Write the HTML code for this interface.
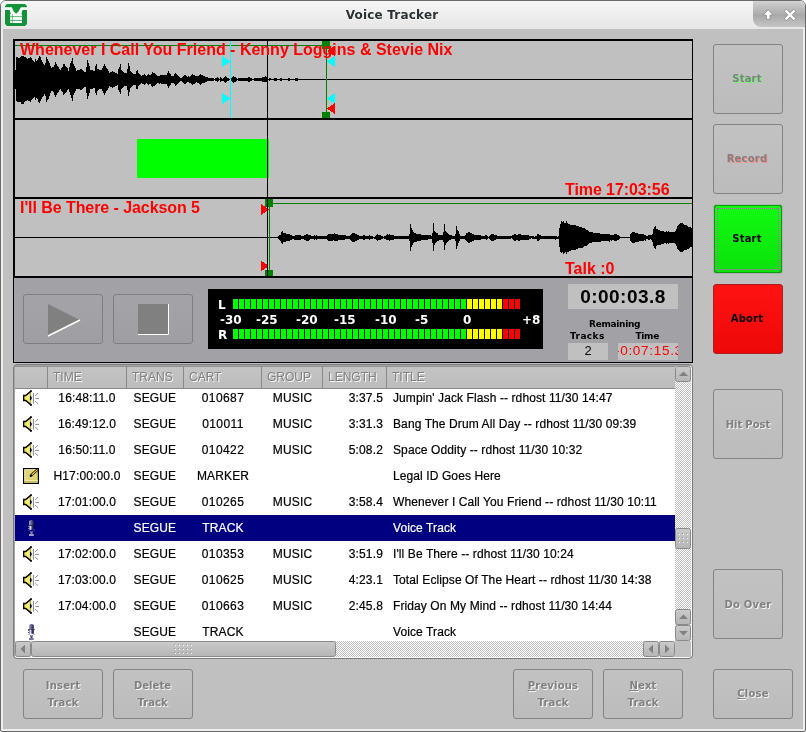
<!DOCTYPE html>
<html><head><meta charset="utf-8"><title>Voice Tracker</title>
<style>
html,body{margin:0;padding:0}
body{width:806px;height:732px;position:relative;overflow:hidden;background:#fff;font-family:"Liberation Sans",sans-serif;}
.a{position:absolute}
#frame{left:0;top:0;width:804px;height:730px;border:1px solid #6b6b6b;border-radius:6px 6px 2px 2px;background:#eeeeee;}
#tbar{left:1px;top:1px;width:804px;height:28px;border-radius:5px 5px 0 0;background:linear-gradient(#f6f6f6,#e6e6e6);}
#title{left:-1px;top:8px;width:786px;text-align:center;font:bold 12px "DejaVu Sans","Liberation Sans",sans-serif;color:#2b3032;letter-spacing:0.2px;text-shadow:0 1px 0 #fff}
#content{left:3px;top:29px;width:800px;height:700px;background:#c0c0c0}
#wbtns{left:753px;top:1px;width:52px;height:26px;border-radius:0 5px 0 8px;background:linear-gradient(#d2d2d2,#a9a9a9 55%,#c6c6c6);}
/* waveform box */
#wbox{left:13px;top:39px;width:677px;height:235px;border:2px solid #000;border-right-width:1px;background:#c0c0c0}
.sep{left:13px;width:680px;height:2px;background:#000}
.wt{font:bold 16px "Liberation Sans",sans-serif;color:#f00;white-space:pre;line-height:16px}
/* transport */
#tp{left:13px;top:278px;width:678px;height:84px;border:1px solid #000;border-top:none;background:#a2a1a6}
.tbtn{border:1px solid #7e7e83;border-radius:3px;box-sizing:border-box;background:linear-gradient(#a4a3a8,#9f9ea3)}
.lbl{font:bold 9px "DejaVu Sans","Liberation Sans",sans-serif;color:#000;white-space:pre}
.mt{font:bold 12px "DejaVu Sans","Liberation Sans",sans-serif;color:#fff;white-space:pre;line-height:12px;margin-top:1px}
/* buttons */
.btn{box-sizing:border-box;border:1px solid #848484;border-radius:3px;background:linear-gradient(#c2c2c2,#bcbcbc);font:bold 10px "DejaVu Sans","Liberation Sans",sans-serif;color:#808080;text-align:center;line-height:17px;display:flex;align-items:center;justify-content:center;padding:0 2px 1px 0;letter-spacing:0.2px}
.bb{padding:0 0 1px 0}
.dis{text-shadow:1px 1px 0 #f6f6f6}
/* list */
#lframe{left:13px;top:364px;width:678px;height:293px;border:1px solid #7c7c7c;border-radius:4px;box-shadow:inset 1px 1px 0 #a6a6a6,inset -1px -1px 0 #f6f6f6;background:#c0c0c0}
.row{left:15px;width:660px;height:26px;font:12px "Liberation Sans",sans-serif;color:#000;-webkit-text-stroke:0.2px;line-height:26px;white-space:pre;letter-spacing:0.15px}
.row span{position:absolute;top:0}
.sel{background:#000080;color:#fff}
.hd{top:366px;height:23px;box-sizing:border-box;border-top:1px solid #909090;border-right:1px solid #8a8a8a;border-bottom:1px solid #8a8a8a;background:linear-gradient(#c4c4c4,#bcbcbc);font:12px "Liberation Sans",sans-serif;color:#808080;text-shadow:1px 1px 0 #fafafa;line-height:21px;padding-left:5px;white-space:pre}
.sb{box-sizing:border-box;border:1px solid #8a8a8a;border-radius:2.5px;background:linear-gradient(#cacaca,#b6b6b6)}
.chk{background-color:#c0c0c0;background-image:conic-gradient(#fff 25%,#c0c0c0 0 50%,#fff 0 75%,#c0c0c0 0);background-size:2px 2px}
</style></head><body>
<div id="root" style="position:absolute;left:0;top:0;width:806px;height:732px;will-change:transform">
<div class="a" id="frame"></div>
<div class="a" id="tbar"></div>
<div class="a" id="content"></div>
<div class="a" id="title">Voice Tracker</div>
<!-- app icon -->
<svg class="a" style="left:5px;top:4px" width="22" height="22" viewBox="0 0 22 22">
<path d="M2 0H20L22 2V20L20 22H2L0 20V2Z" fill="#12923a"/>
<path d="M0 3.300H6.700L8.800 7.600L11.100 9.800L13.500 7.600L15.900 3.300H22V6.100H17.400L16.400 9.900H17V19.100H5.200V9.900H5.900L4.700 6.100H0Z" fill="#fff"/>
<rect x="5.200" y="12.300" width="11.800" height="0.800" fill="#12923a" fill-opacity="0.85"/>
<rect x="5.200" y="16.100" width="11.800" height="0.800" fill="#12923a" fill-opacity="0.85"/>
<rect x="7.300" y="10" width="0.700" height="9.100" fill="#12923a" fill-opacity="0.7"/>
</svg>
<div class="a" id="wbtns"></div>
<svg class="a" style="left:753px;top:1px" width="52" height="26" viewBox="0 0 52 26">
<path d="M15.200 8.700L20.300 14.200H17V18.400H13.400V14.200H10.100Z" fill="#fff" stroke="#8c8c8c" stroke-width="0.900" stroke-linejoin="round"/>
<path d="M32.200 9L41.900 18.700M41.900 9L32.200 18.700" stroke="#8c8c8c" stroke-width="3.800" fill="none"/>
<path d="M32.500 9.300L41.600 18.400M41.600 9.300L32.500 18.400" stroke="#fff" stroke-width="2.400" fill="none"/>
</svg>

<!-- waveform box -->
<div class="a" id="wbox"></div>
<div class="a sep" style="top:118px"></div>
<div class="a sep" style="top:197px"></div>
<svg class="a" style="left:0;top:0" width="806" height="300" viewBox="0 0 806 300" shape-rendering="crispEdges">
<!-- pane1 -->
<rect x="15" y="79" width="677" height="1" fill="#000"/>
<path d="M15.5 70V89M16.5 57V101M17.5 57V102M18.5 58V102M19.5 58V102M20.5 57V102M21.5 56V104M22.5 56V104M23.5 56V104M24.5 57V102M25.5 57V101M26.5 58V101M27.5 59V100M28.5 58V101M29.5 58V101M30.5 57V102M31.5 58V100M32.5 60V99M33.5 61V98M34.5 62V97M35.5 59V100M36.5 61V98M37.5 60V99M38.5 58V102M39.5 56V103M40.5 57V101M41.5 60V99M42.5 62V97M43.5 64V96M44.5 65V94M45.5 63V96M46.5 57V102M47.5 59V100M48.5 61V99M49.5 63V96M50.5 66V93M51.5 68V91M52.5 67V91M53.5 67V92M54.5 65V95M55.5 62V97M56.5 64V95M57.5 66V93M58.5 67V92M59.5 69V90M60.5 70V89M61.5 68V91M62.5 67V92M63.5 64V95M64.5 64V94M65.5 66V93M66.5 67V92M67.5 68V90M68.5 71V89M69.5 67V92M70.5 63V95M71.5 61V98M72.5 58V101M73.5 64V95M74.5 66V93M75.5 68V91M76.5 71V89M77.5 70V89M78.5 70V89M79.5 70V89M80.5 69V90M81.5 69V90M82.5 70V89M83.5 71V88M84.5 72V87M85.5 72V87M86.5 67V93M87.5 60V99M88.5 63V96M89.5 66V93M90.5 70V89M91.5 70V89M92.5 70V89M93.5 71V88M94.5 71V88M95.5 66V93M96.5 64V95M97.5 69V91M98.5 69V90M99.5 70V89M100.5 70V89M101.5 70V89M102.5 68V91M103.5 66V93M104.5 64V95M105.5 66V93M106.5 68V91M107.5 69V90M108.5 71V88M109.5 73V86M110.5 72V87M111.5 72V87M112.5 71V88M113.5 72V87M114.5 72V87M115.5 73V86M116.5 73V86M117.5 74V85M118.5 69V90M119.5 67V92M120.5 64V94M121.5 70V89M122.5 71V88M123.5 72V87M124.5 73V86M125.5 73V86M126.5 73V86M127.5 69V90M128.5 63V96M129.5 66V92M130.5 71V88M131.5 72V87M132.5 73V86M133.5 74V85M134.5 74V85M135.5 74V85M136.5 71V89M137.5 70V89M138.5 73V86M139.5 74V85M140.5 75V84M141.5 76V83M142.5 75V84M143.5 75V84M144.5 74V85M145.5 75V84M146.5 76V83M147.5 75V84M148.5 74V85M149.5 75V84M150.5 75V84M151.5 74V86M152.5 72V87M153.5 73V86M154.5 73V86M155.5 74V85M156.5 75V84M157.5 76V83M158.5 76V83M159.5 76V84M160.5 75V83M161.5 75V84M162.5 75V84M163.5 75V84M164.5 75V84M165.5 75V84M166.5 75V84M167.5 73V86M168.5 71V88M169.5 73V86M170.5 74V85M171.5 76V83M172.5 76V83M173.5 76V83M174.5 74V84M175.5 73V86M176.5 74V85M177.5 75V84M178.5 76V83M179.5 77V82M180.5 78V81M181.5 78V81M182.5 77V82M183.5 76V83M184.5 75V84M185.5 75V84M186.5 76V83M187.5 77V82M188.5 76V82M189.5 77V83M190.5 76V83M191.5 75V84M192.5 74V85M193.5 75V84M194.5 75V84M195.5 76V83M196.5 76V82M197.5 76V83M198.5 76V83M199.5 75V84M200.5 74V85M201.5 75V84M202.5 75V83M203.5 76V83M204.5 76V83M205.5 77V82M206.5 77V82M207.5 77V81M208.5 78V81M209.5 78V81M210.5 78V81M211.5 78V81M212.5 78V81M213.5 78V81M214.5 79V80M215.5 78V81M216.5 78V81M217.5 77V82M218.5 78V81M219.5 79V80M220.5 77V82M221.5 78V81M222.5 79V81M223.5 78V81M224.5 77V82M225.5 76V83M226.5 77V82M227.5 78V81M228.5 78V81M229.5 79V80M230.5 79V80M231.5 78V81M232.5 77V82M233.5 76V83M234.5 77V82M235.5 77V82M236.5 78V81M237.5 79V80M238.5 78V81M239.5 78V81M240.5 78V81M241.5 78V81M242.5 78V81M243.5 78V81M244.5 78V81M245.5 78V81M246.5 78V81M247.5 78V81M248.5 77V82M249.5 77V82M250.5 78V81M251.5 78V81M252.5 79V80M253.5 79V80M254.5 78V81M255.5 78V81M256.5 78V81M257.5 78V81M258.5 78V81M259.5 78V81M260.5 78V81M261.5 78V81M262.5 77V82M263.5 77V82M264.5 77V82M265.5 76V82M266.5 77V82M267.5 78V81M269.5 78V81M270.5 78V80M274.5 78V81M275.5 78V81M276.5 78V81M277.5 79V80M280.5 78V81M281.5 78V81M288.5 78V81M289.5 78V81M295.5 78V81M296.5 78V81M297.5 78V81" stroke="#000" stroke-width="1" fill="none"/>
<rect x="15" y="45" width="307" height="1" fill="#008000"/>
<rect x="230" y="41" width="1" height="77" fill="#0ff"/>
<path d="M222 56L230.500 61.500L222 67ZM222 93L230.500 98.500L222 104Z" fill="#0ff"/>
<rect x="267" y="41" width="1" height="235" fill="#000"/>
<rect x="326" y="41" width="1" height="77" fill="#008000"/>
<rect x="322" y="41" width="8" height="8" fill="#008000"/>
<rect x="322" y="112" width="8" height="6" fill="#008000"/>
<path d="M335 56L327 61.500L335 67ZM335 93L327 98.500L335 104Z" fill="#0ff"/>
<path d="M335 45.500L327 51L335 56.500ZM335 103L327 108.500L335 114Z" fill="#f00"/>
<!-- pane2 -->
<rect x="137" y="139" width="132" height="39" fill="#0f0"/>
<rect x="267" y="120" width="1" height="77" fill="#000"/>
<!-- pane3 -->
<rect x="15" y="237" width="677" height="1" fill="#000"/>
<path d="M278.5 236V239M279.5 235V240M280.5 235V241M281.5 232V243M282.5 231V244M283.5 233V242M284.5 233V242M285.5 233V242M286.5 234V241M287.5 234V241M288.5 234V241M289.5 234V241M290.5 235V240M291.5 235V240M292.5 236V239M293.5 236V239M294.5 236V240M295.5 235V240M296.5 235V240M297.5 235V240M298.5 235V240M299.5 235V240M300.5 235V240M301.5 236V239M302.5 236V239M303.5 236V239M304.5 235V240M305.5 235V240M306.5 234V241M307.5 234V241M308.5 235V241M309.5 235V240M310.5 235V239M311.5 236V239M312.5 236V239M313.5 236V239M314.5 235V240M315.5 236V239M316.5 235V240M317.5 236V239M318.5 236V239M319.5 236V239M320.5 236V239M321.5 236V239M322.5 236V239M323.5 236V239M324.5 236V239M325.5 236V239M326.5 236V239M327.5 235V240M328.5 234V241M329.5 234V241M330.5 234V241M331.5 234V241M332.5 234V241M333.5 234V240M334.5 233V241M335.5 234V241M336.5 234V241M337.5 234V241M338.5 235V240M339.5 235V240M340.5 235V240M341.5 235V240M342.5 235V240M343.5 235V240M344.5 235V240M345.5 235V239M346.5 236V239M347.5 236V239M348.5 236V239M349.5 236V239M350.5 235V240M351.5 234V241M352.5 233V242M353.5 233V242M354.5 233V242M355.5 234V241M356.5 234V241M357.5 235V240M358.5 235V240M359.5 236V239M360.5 236V239M361.5 236V239M362.5 236V239M363.5 235V240M364.5 235V240M365.5 236V239M366.5 236V239M367.5 236V239M368.5 236V239M369.5 235V240M370.5 236V239M371.5 236V239M372.5 236V239M373.5 237V238M374.5 237V239M375.5 236V239M376.5 235V240M377.5 234V241M378.5 235V240M379.5 235V240M380.5 235V240M381.5 236V239M382.5 236V239M383.5 237V238M384.5 236V239M385.5 236V239M386.5 235V240M387.5 234V240M388.5 235V240M389.5 234V241M390.5 235V240M391.5 235V240M392.5 235V240M393.5 235V240M394.5 236V239M395.5 236V239M396.5 236V239M397.5 236V239M398.5 236V239M399.5 236V239M400.5 236V239M401.5 236V239M402.5 236V239M403.5 236V239M404.5 236V239M405.5 236V239M406.5 236V239M407.5 236V239M408.5 236V239M409.5 234V241M410.5 224V251M411.5 228V247M412.5 230V245M413.5 232V243M414.5 233V242M415.5 233V242M416.5 234V242M417.5 234V241M418.5 234V241M419.5 234V241M420.5 234V241M421.5 235V240M422.5 235V240M423.5 235V240M424.5 235V240M425.5 235V240M426.5 235V240M427.5 235V240M428.5 235V239M429.5 235V239M430.5 235V239M431.5 236V239M432.5 233V243M433.5 223V251M434.5 231V245M435.5 232V243M436.5 233V242M437.5 233V241M438.5 235V241M439.5 235V240M440.5 235V240M441.5 235V240M442.5 235V240M443.5 232V242M444.5 224V250M445.5 231V245M446.5 232V243M447.5 233V242M448.5 234V241M449.5 235V240M450.5 235V240M451.5 235V239M452.5 236V239M453.5 236V239M454.5 236V239M455.5 234V241M456.5 226V249M457.5 230V246M458.5 231V243M459.5 234V241M460.5 236V239M461.5 236V239M462.5 236V239M463.5 236V239M464.5 236V239M465.5 235V240M466.5 233V241M467.5 233V242M468.5 232V243M469.5 232V243M470.5 233V242M471.5 233V242M472.5 234V241M473.5 234V241M474.5 235V240M475.5 235V240M476.5 235V240M477.5 235V240M478.5 235V240M479.5 235V240M480.5 235V240M481.5 236V239M482.5 236V239M483.5 236V239M484.5 236V239M485.5 235V239M486.5 235V240M487.5 236V239M488.5 237V238M489.5 236V239M490.5 235V240M491.5 234V241M492.5 234V241M493.5 234V241M494.5 235V240M495.5 235V240M496.5 235V239M497.5 236V239M498.5 236V239M499.5 236V239M500.5 236V239M501.5 236V239M502.5 236V239M503.5 236V239M504.5 236V239M505.5 236V239M506.5 236V239M507.5 236V239M508.5 236V239M509.5 236V239M510.5 236V239M511.5 236V238M512.5 235V239M513.5 235V240M514.5 234V241M515.5 234V241M516.5 235V240M517.5 235V240M518.5 234V241M519.5 234V241M520.5 234V240M521.5 235V240M522.5 235V240M523.5 235V240M524.5 235V240M525.5 235V240M526.5 235V240M527.5 235V240M528.5 235V240M529.5 236V239M530.5 236V239M531.5 236V238M532.5 236V239M533.5 236V239M534.5 237V239M535.5 236V239M536.5 236V239M537.5 234V241M538.5 234V241M539.5 235V240M540.5 235V239M541.5 236V239M542.5 236V239M543.5 236V239M544.5 236V239M545.5 236V239M546.5 236V239M547.5 236V239M548.5 236V239M549.5 236V239M550.5 236V239M551.5 236V239M552.5 236V239M553.5 236V239M554.5 236V239M555.5 236V240M556.5 236V239M557.5 237V239M558.5 236V239M559.5 228V247M560.5 224V252M561.5 221V253M562.5 222V252M563.5 221V254M564.5 223V253M565.5 223V252M566.5 221V254M567.5 223V252M568.5 224V252M569.5 224V251M570.5 225V251M571.5 225V250M572.5 225V250M573.5 225V250M574.5 225V250M575.5 225V250M576.5 226V249M577.5 226V249M578.5 226V248M579.5 227V248M580.5 227V248M581.5 227V248M582.5 228V248M583.5 228V247M584.5 228V246M585.5 229V246M586.5 230V246M587.5 230V245M588.5 231V244M589.5 232V243M590.5 232V243M591.5 232V243M592.5 232V242M593.5 233V242M594.5 233V242M595.5 233V242M596.5 233V242M597.5 233V242M598.5 233V242M599.5 233V242M600.5 234V242M601.5 234V241M602.5 234V241M603.5 234V241M604.5 234V241M605.5 234V241M606.5 234V241M607.5 234V241M608.5 234V241M609.5 234V242M610.5 235V240M611.5 235V241M612.5 235V240M613.5 235V240M614.5 234V241M615.5 234V241M616.5 234V241M617.5 235V240M618.5 235V240M619.5 236V239M630.5 234V241M631.5 233V242M632.5 232V243M633.5 232V243M634.5 232V243M635.5 233V242M636.5 233V242M637.5 233V242M638.5 234V242M639.5 234V241M640.5 234V241M641.5 234V241M642.5 234V241M643.5 234V241M644.5 235V240M645.5 235V241M646.5 236V239M647.5 236V239M648.5 235V240M649.5 235V240M650.5 235V239M651.5 235V240M652.5 234V242M653.5 229V246M654.5 227V248M655.5 226V249M656.5 229V246M657.5 229V245M658.5 230V245M659.5 230V245M660.5 231V245M661.5 231V244M662.5 231V244M663.5 231V244M664.5 232V243M665.5 232V243M666.5 231V244M667.5 232V243M668.5 231V244M669.5 232V243M670.5 232V243M671.5 232V243M672.5 232V243M673.5 232V243M674.5 232V243M675.5 231V244M676.5 229V246M677.5 226V249M678.5 225V250M679.5 224V251M680.5 223V252M681.5 223V252M682.5 223V252M683.5 224V251M684.5 225V250M685.5 225V250M686.5 225V250M687.5 226V249M688.5 227V249M689.5 227V248M690.5 227V247M691.5 228V247" stroke="#000" stroke-width="1" fill="none"/>
<rect x="265" y="199" width="8" height="8" fill="#008000"/>
<rect x="265" y="270" width="8" height="6" fill="#008000"/>
<rect x="269" y="199" width="1" height="77" fill="#008000"/>
<rect x="273" y="203" width="419" height="1" fill="#008000"/>
<path d="M261 204L269 209.500L261 215ZM261 260.500L269 266L261 271.500Z" fill="#f00"/>
<rect x="267" y="199" width="1" height="77" fill="#000"/>
</svg>
<div class="a wt" style="left:20px;top:42px">Whenever I Call You Friend - Kenny Loggins &amp; Stevie Nix</div>
<div class="a wt" style="left:20px;top:200px;letter-spacing:-0.07px">I'll Be There - Jackson 5</div>
<div class="a wt" style="left:565px;top:182px;letter-spacing:-0.08px">Time 17:03:56</div>
<div class="a wt" style="left:565px;top:261px">Talk :0</div>

<!-- transport -->
<div class="a" id="tp"></div>
<div class="a tbtn" style="left:23px;top:294px;width:80px;height:50px"></div>
<div class="a tbtn" style="left:113px;top:294px;width:80px;height:50px"></div>
<svg class="a" style="left:23px;top:294px" width="170" height="50" viewBox="0 0 170 50">
<path d="M25 10L57 26L25 42Z" fill="#808080"/>
<path d="M25 42L57 26" stroke="#fff" stroke-width="1.500"/>
<rect x="115" y="10" width="31" height="31" fill="#808080"/>
<path d="M145.500 10V40.500H115" stroke="#fff" stroke-width="1" fill="none"/>
</svg>
<!-- meter -->
<div class="a" style="left:208px;top:289px;width:335px;height:60px;background:#000"></div>
<div class="a" style="left:233px;top:299px;width:288px;height:10px;background:linear-gradient(90deg,#0f0 234px,#ff0 234px,#ff0 270px,#f00 270px)"></div>
<div class="a" style="left:233px;top:329px;width:288px;height:10px;background:linear-gradient(90deg,#0f0 234px,#ff0 234px,#ff0 270px,#f00 270px)"></div>
<div class="a" style="left:233px;top:299px;width:288px;height:40px;background:repeating-linear-gradient(90deg,transparent 0,transparent 5px,#000 5px,#000 6px)"></div>
<div class="a mt" style="left:218px;top:298px">L</div>
<div class="a mt" style="left:218px;top:328px">R</div>
<div class="a mt" style="left:220px;top:313px">-30</div>
<div class="a mt" style="left:256px;top:313px">-25</div>
<div class="a mt" style="left:296px;top:313px">-20</div>
<div class="a mt" style="left:334px;top:313px">-15</div>
<div class="a mt" style="left:375px;top:313px">-10</div>
<div class="a mt" style="left:415px;top:313px">-5</div>
<div class="a mt" style="left:463px;top:313px">0</div>
<div class="a mt" style="left:522px;top:313px">+8</div>
<!-- time display -->
<div class="a" style="left:568px;top:284px;width:110px;height:25px;background:#c0c0c0;font:bold 19px 'Liberation Sans',sans-serif;letter-spacing:0.45px;line-height:25px;text-align:center;color:#000">0:00:03.8</div>
<div class="a lbl" style="left:589px;top:319px;letter-spacing:-0.3px">Remaining</div>
<div class="a lbl" style="left:570px;top:331px;letter-spacing:0.4px">Tracks</div>
<div class="a lbl" style="left:635.5px;top:331px;letter-spacing:-0.3px">Time</div>
<div class="a" style="left:568px;top:343px;width:40px;height:17px;background:#c0c0c0;font:13px 'Liberation Sans',sans-serif;line-height:15px;text-align:center;color:#000">2</div>
<div class="a" style="left:618px;top:343px;width:60px;height:17px;background:#c0c0c0;overflow:hidden;color:#f00"><div class="a" style="left:-3px;font:13.5px 'Liberation Sans',sans-serif;line-height:16px;letter-spacing:0.7px;white-space:pre">-0:07:15.3</div></div>

<!-- right buttons -->
<div class="a btn" style="left:713px;top:44px;width:70px;height:70px;text-shadow:1px 1px 0 #6f6">Start</div>
<div class="a btn" style="left:713px;top:124px;width:70px;height:70px;text-shadow:1px 1px 0 #f88">Record</div>
<div class="a btn" style="left:713px;top:204px;width:70px;height:70px;background:#0c9c0c;color:#000;border-color:#b0b0b0"><div class="a" style="left:1px;top:1px;right:1px;bottom:1px;border-radius:3px;background:linear-gradient(#12fa12,#0ae20a)"></div><div class="a" style="left:3px;top:3px;right:3px;bottom:3px;border:1px dotted #e040e0"></div><span style="position:relative">Start</span></div>
<div class="a btn" style="left:713px;top:284px;width:70px;height:70px;background:linear-gradient(#ff1212,#ee0808);color:#000;border-color:#a82020">Abort</div>
<div class="a btn dis" style="left:713px;top:389px;width:70px;height:70px;padding:0;letter-spacing:0;word-spacing:-0.5px">Hit Post</div>
<div class="a btn dis" style="left:713px;top:569px;width:70px;height:70px;padding:0">Do Over</div>
<div class="a btn dis bb" style="left:713px;top:669px;width:80px;height:50px"><span><u>C</u>lose</span></div>
<!-- bottom buttons -->
<div class="a btn dis bb" style="left:23px;top:669px;width:80px;height:50px">Insert<br>Track</div>
<div class="a btn dis bb" style="left:113px;top:669px;width:80px;height:50px;letter-spacing:0.05px;padding-right:1px">Delete<br>Track</div>
<div class="a btn dis bb" style="left:513px;top:669px;width:80px;height:50px"><span><u>P</u>revious<br>Track</span></div>
<div class="a btn dis bb" style="left:603px;top:669px;width:80px;height:50px"><span><u>N</u>ext<br>Track</span></div>

<!-- list -->
<div class="a" id="lframe"></div>
<div class="a" style="left:15px;top:366px;width:660px;height:275px;overflow:hidden;background:#fff" id="lv">
<div class="a row" style="left:0;top:19px"><svg class="a" style="left:8px;top:5px" width="17" height="16" viewBox="0 0 17 16"><path d="M0.600 5.600H2.600L7.600 0.700V15.300L2.600 10.400H0.600Z" fill="#e4dc00"/><path d="M3 6.500L6.800 2.800V13.200L3 9.500Z" fill="#fff" fill-opacity="0.5"/><rect x="1.300" y="6.300" width="1.200" height="3.400" fill="#fff" fill-opacity="0.75"/><path d="M8 1.500V14.500L10 12.800V3.200Z" fill="#ececec"/><path d="M8.300 0.900L2.700 5.500H0.700V10.500H2.700L8.300 15.100" fill="none" stroke="#000" stroke-width="1.400" stroke-linejoin="miter"/><path d="M7.300 0.300H8.800V2H7.300ZM7.300 14H8.800V15.700H7.300Z" fill="#000"/><path d="M7 5.400Q10.600 8 7 10.600Z" fill="#000"/><path d="M7.400 2V14" stroke="#000" stroke-width="0.600" stroke-opacity="0.5"/><path d="M10.500 3V13.600" stroke="#909090" stroke-width="1"/><path d="M12.200 5.700L15 3.100M12.200 8.400H16M12.200 11.100L15 13.700" stroke="#8c8c8c" stroke-width="1"/></svg><span style="left:32px;width:80px;text-align:center">16:48:11.0</span><span style="left:118.5px">SEGUE</span><span style="left:168px;width:80px;text-align:center;letter-spacing:0.4px">010687</span><span style="left:247px;width:61px;text-align:center">MUSIC</span><span style="left:308px;width:60px;text-align:right">3:37.5</span><span style="left:378px;letter-spacing:0.1px">Jumpin' Jack Flash -- rdhost 11/30 14:47</span></div>
<div class="a row" style="left:0;top:45px"><svg class="a" style="left:8px;top:5px" width="17" height="16" viewBox="0 0 17 16"><path d="M0.600 5.600H2.600L7.600 0.700V15.300L2.600 10.400H0.600Z" fill="#e4dc00"/><path d="M3 6.500L6.800 2.800V13.200L3 9.500Z" fill="#fff" fill-opacity="0.5"/><rect x="1.300" y="6.300" width="1.200" height="3.400" fill="#fff" fill-opacity="0.75"/><path d="M8 1.500V14.500L10 12.800V3.200Z" fill="#ececec"/><path d="M8.300 0.900L2.700 5.500H0.700V10.500H2.700L8.300 15.100" fill="none" stroke="#000" stroke-width="1.400" stroke-linejoin="miter"/><path d="M7.300 0.300H8.800V2H7.300ZM7.300 14H8.800V15.700H7.300Z" fill="#000"/><path d="M7 5.400Q10.600 8 7 10.600Z" fill="#000"/><path d="M7.400 2V14" stroke="#000" stroke-width="0.600" stroke-opacity="0.5"/><path d="M10.500 3V13.600" stroke="#909090" stroke-width="1"/><path d="M12.200 5.700L15 3.100M12.200 8.400H16M12.200 11.100L15 13.700" stroke="#8c8c8c" stroke-width="1"/></svg><span style="left:32px;width:80px;text-align:center">16:49:12.0</span><span style="left:118.5px">SEGUE</span><span style="left:168px;width:80px;text-align:center;letter-spacing:0.4px">010011</span><span style="left:247px;width:61px;text-align:center">MUSIC</span><span style="left:308px;width:60px;text-align:right">3:31.3</span><span style="left:378px;letter-spacing:0.1px">Bang The Drum All Day -- rdhost 11/30 09:39</span></div>
<div class="a row" style="left:0;top:71px"><svg class="a" style="left:8px;top:5px" width="17" height="16" viewBox="0 0 17 16"><path d="M0.600 5.600H2.600L7.600 0.700V15.300L2.600 10.400H0.600Z" fill="#e4dc00"/><path d="M3 6.500L6.800 2.800V13.200L3 9.500Z" fill="#fff" fill-opacity="0.5"/><rect x="1.300" y="6.300" width="1.200" height="3.400" fill="#fff" fill-opacity="0.75"/><path d="M8 1.500V14.500L10 12.800V3.200Z" fill="#ececec"/><path d="M8.300 0.900L2.700 5.500H0.700V10.500H2.700L8.300 15.100" fill="none" stroke="#000" stroke-width="1.400" stroke-linejoin="miter"/><path d="M7.300 0.300H8.800V2H7.300ZM7.300 14H8.800V15.700H7.300Z" fill="#000"/><path d="M7 5.400Q10.600 8 7 10.600Z" fill="#000"/><path d="M7.400 2V14" stroke="#000" stroke-width="0.600" stroke-opacity="0.5"/><path d="M10.500 3V13.600" stroke="#909090" stroke-width="1"/><path d="M12.200 5.700L15 3.100M12.200 8.400H16M12.200 11.100L15 13.700" stroke="#8c8c8c" stroke-width="1"/></svg><span style="left:32px;width:80px;text-align:center">16:50:11.0</span><span style="left:118.5px">SEGUE</span><span style="left:168px;width:80px;text-align:center;letter-spacing:0.4px">010422</span><span style="left:247px;width:61px;text-align:center">MUSIC</span><span style="left:308px;width:60px;text-align:right">5:08.2</span><span style="left:378px;letter-spacing:0.1px">Space Oddity -- rdhost 11/30 10:32</span></div>
<div class="a row" style="left:0;top:97px"><svg class="a" style="left:8px;top:5px" width="16" height="16" viewBox="0 0 16 16"><rect x="0.600" y="0.600" width="14.800" height="14.800" fill="#ddd478" stroke="#000" stroke-width="1.200"/><path d="M1.700 12V1.700H14" stroke="#f4efb8" stroke-width="0.800" fill="none"/><rect x="1.300" y="12" width="13.400" height="0.900" fill="#f6f2c4"/><rect x="1.300" y="12.900" width="13.400" height="1.900" fill="#c9bf5c"/><path d="M14.300 1.800L8.200 7.400" stroke="#000" stroke-width="2.600" stroke-linecap="round"/><path d="M14.200 1.900L9 6.700" stroke="#f0b020" stroke-width="1.200" stroke-linecap="round"/><path d="M14.400 1.500L9.300 6.200" stroke="#ffe860" stroke-width="0.500"/><circle cx="7.600" cy="8.200" r="0.900" fill="#000"/></svg><span style="left:32px;width:80px;text-align:center">H17:00:00.0</span><span style="left:118.5px">SEGUE</span><span style="left:168px;width:80px;text-align:center">MARKER</span><span style="left:378px;letter-spacing:0.1px">Legal ID Goes Here</span></div>
<div class="a row" style="left:0;top:123px"><svg class="a" style="left:8px;top:5px" width="17" height="16" viewBox="0 0 17 16"><path d="M0.600 5.600H2.600L7.600 0.700V15.300L2.600 10.400H0.600Z" fill="#e4dc00"/><path d="M3 6.500L6.800 2.800V13.200L3 9.500Z" fill="#fff" fill-opacity="0.5"/><rect x="1.300" y="6.300" width="1.200" height="3.400" fill="#fff" fill-opacity="0.75"/><path d="M8 1.500V14.500L10 12.800V3.200Z" fill="#ececec"/><path d="M8.300 0.900L2.700 5.500H0.700V10.500H2.700L8.300 15.100" fill="none" stroke="#000" stroke-width="1.400" stroke-linejoin="miter"/><path d="M7.300 0.300H8.800V2H7.300ZM7.300 14H8.800V15.700H7.300Z" fill="#000"/><path d="M7 5.400Q10.600 8 7 10.600Z" fill="#000"/><path d="M7.400 2V14" stroke="#000" stroke-width="0.600" stroke-opacity="0.5"/><path d="M10.500 3V13.600" stroke="#909090" stroke-width="1"/><path d="M12.200 5.700L15 3.100M12.200 8.400H16M12.200 11.100L15 13.700" stroke="#8c8c8c" stroke-width="1"/></svg><span style="left:32px;width:80px;text-align:center">17:01:00.0</span><span style="left:118.5px">SEGUE</span><span style="left:168px;width:80px;text-align:center;letter-spacing:0.4px">010265</span><span style="left:247px;width:61px;text-align:center">MUSIC</span><span style="left:308px;width:60px;text-align:right">3:58.4</span><span style="left:378px;letter-spacing:0.1px">Whenever I Call You Friend -- rdhost 11/30 10:11</span></div>
<div class="a row sel" style="left:0;top:149px"><svg class="a" style="left:8px;top:5px" width="16" height="16" viewBox="0 0 16 16"><defs><linearGradient id="mg1" x1="0" x2="1"><stop offset="0" stop-color="#a8a8c8"/><stop offset="0.450" stop-color="#686898"/><stop offset="1" stop-color="#161648"/></linearGradient><linearGradient id="mh1" x1="0" x2="1"><stop offset="0" stop-color="#6060a0"/><stop offset="0.300" stop-color="#e6e6f6"/><stop offset="0.650" stop-color="#3a3a72"/><stop offset="1" stop-color="#121242"/></linearGradient></defs><path d="M6 1.500Q6 0 8.400 0Q10.800 0 10.800 1.500V5.300H6Z" fill="url(#mg1)"/><rect x="5.300" y="5.200" width="6.400" height="0.900" fill="#15154a"/><rect x="6" y="5.800" width="4.800" height="4" fill="url(#mh1)"/><path d="M5.500 6V9.200Q5.800 11.600 8.400 11.600Q11 11.600 11.400 9.500" stroke="#9a9ac4" stroke-width="0.800" fill="none" stroke-dasharray="1 1"/><rect x="7.400" y="11.500" width="2.200" height="3" fill="#7c7ca4"/><rect x="6" y="14.200" width="4.800" height="1.700" fill="#b0b0c6"/></svg><span style="left:118.5px">SEGUE</span><span style="left:168px;width:80px;text-align:center">TRACK</span><span style="left:378px;letter-spacing:0.1px">Voice Track</span></div>
<div class="a row" style="left:0;top:175px"><svg class="a" style="left:8px;top:5px" width="17" height="16" viewBox="0 0 17 16"><path d="M0.600 5.600H2.600L7.600 0.700V15.300L2.600 10.400H0.600Z" fill="#e4dc00"/><path d="M3 6.500L6.800 2.800V13.200L3 9.500Z" fill="#fff" fill-opacity="0.5"/><rect x="1.300" y="6.300" width="1.200" height="3.400" fill="#fff" fill-opacity="0.75"/><path d="M8 1.500V14.500L10 12.800V3.200Z" fill="#ececec"/><path d="M8.300 0.900L2.700 5.500H0.700V10.500H2.700L8.300 15.100" fill="none" stroke="#000" stroke-width="1.400" stroke-linejoin="miter"/><path d="M7.300 0.300H8.800V2H7.300ZM7.300 14H8.800V15.700H7.300Z" fill="#000"/><path d="M7 5.400Q10.600 8 7 10.600Z" fill="#000"/><path d="M7.400 2V14" stroke="#000" stroke-width="0.600" stroke-opacity="0.5"/><path d="M10.500 3V13.600" stroke="#909090" stroke-width="1"/><path d="M12.200 5.700L15 3.100M12.200 8.400H16M12.200 11.100L15 13.700" stroke="#8c8c8c" stroke-width="1"/></svg><span style="left:32px;width:80px;text-align:center">17:02:00.0</span><span style="left:118.5px">SEGUE</span><span style="left:168px;width:80px;text-align:center;letter-spacing:0.4px">010353</span><span style="left:247px;width:61px;text-align:center">MUSIC</span><span style="left:308px;width:60px;text-align:right">3:51.9</span><span style="left:378px;letter-spacing:0.1px">I'll Be There -- rdhost 11/30 10:24</span></div>
<div class="a row" style="left:0;top:201px"><svg class="a" style="left:8px;top:5px" width="17" height="16" viewBox="0 0 17 16"><path d="M0.600 5.600H2.600L7.600 0.700V15.300L2.600 10.400H0.600Z" fill="#e4dc00"/><path d="M3 6.500L6.800 2.800V13.200L3 9.500Z" fill="#fff" fill-opacity="0.5"/><rect x="1.300" y="6.300" width="1.200" height="3.400" fill="#fff" fill-opacity="0.75"/><path d="M8 1.500V14.500L10 12.800V3.200Z" fill="#ececec"/><path d="M8.300 0.900L2.700 5.500H0.700V10.500H2.700L8.300 15.100" fill="none" stroke="#000" stroke-width="1.400" stroke-linejoin="miter"/><path d="M7.300 0.300H8.800V2H7.300ZM7.300 14H8.800V15.700H7.300Z" fill="#000"/><path d="M7 5.400Q10.600 8 7 10.600Z" fill="#000"/><path d="M7.400 2V14" stroke="#000" stroke-width="0.600" stroke-opacity="0.5"/><path d="M10.500 3V13.600" stroke="#909090" stroke-width="1"/><path d="M12.200 5.700L15 3.100M12.200 8.400H16M12.200 11.100L15 13.700" stroke="#8c8c8c" stroke-width="1"/></svg><span style="left:32px;width:80px;text-align:center">17:03:00.0</span><span style="left:118.5px">SEGUE</span><span style="left:168px;width:80px;text-align:center;letter-spacing:0.4px">010625</span><span style="left:247px;width:61px;text-align:center">MUSIC</span><span style="left:308px;width:60px;text-align:right">4:23.1</span><span style="left:378px;letter-spacing:0.1px">Total Eclipse Of The Heart -- rdhost 11/30 14:38</span></div>
<div class="a row" style="left:0;top:227px"><svg class="a" style="left:8px;top:5px" width="17" height="16" viewBox="0 0 17 16"><path d="M0.600 5.600H2.600L7.600 0.700V15.300L2.600 10.400H0.600Z" fill="#e4dc00"/><path d="M3 6.500L6.800 2.800V13.200L3 9.500Z" fill="#fff" fill-opacity="0.5"/><rect x="1.300" y="6.300" width="1.200" height="3.400" fill="#fff" fill-opacity="0.75"/><path d="M8 1.500V14.500L10 12.800V3.200Z" fill="#ececec"/><path d="M8.300 0.900L2.700 5.500H0.700V10.500H2.700L8.300 15.100" fill="none" stroke="#000" stroke-width="1.400" stroke-linejoin="miter"/><path d="M7.300 0.300H8.800V2H7.300ZM7.300 14H8.800V15.700H7.300Z" fill="#000"/><path d="M7 5.400Q10.600 8 7 10.600Z" fill="#000"/><path d="M7.400 2V14" stroke="#000" stroke-width="0.600" stroke-opacity="0.5"/><path d="M10.500 3V13.600" stroke="#909090" stroke-width="1"/><path d="M12.200 5.700L15 3.100M12.200 8.400H16M12.200 11.100L15 13.700" stroke="#8c8c8c" stroke-width="1"/></svg><span style="left:32px;width:80px;text-align:center">17:04:00.0</span><span style="left:118.5px">SEGUE</span><span style="left:168px;width:80px;text-align:center;letter-spacing:0.4px">010663</span><span style="left:247px;width:61px;text-align:center">MUSIC</span><span style="left:308px;width:60px;text-align:right">2:45.8</span><span style="left:378px;letter-spacing:0.1px">Friday On My Mind -- rdhost 11/30 14:44</span></div>
<div class="a row" style="left:0;top:253px"><svg class="a" style="left:8px;top:5px" width="16" height="16" viewBox="0 0 16 16"><defs><linearGradient id="mg2" x1="0" x2="1"><stop offset="0" stop-color="#a8a8c8"/><stop offset="0.450" stop-color="#686898"/><stop offset="1" stop-color="#161648"/></linearGradient><linearGradient id="mh2" x1="0" x2="1"><stop offset="0" stop-color="#6060a0"/><stop offset="0.300" stop-color="#e6e6f6"/><stop offset="0.650" stop-color="#3a3a72"/><stop offset="1" stop-color="#121242"/></linearGradient></defs><path d="M6 1.500Q6 0 8.400 0Q10.800 0 10.800 1.500V5.300H6Z" fill="url(#mg2)"/><rect x="5.300" y="5.200" width="6.400" height="0.900" fill="#15154a"/><rect x="6" y="5.800" width="4.800" height="4" fill="url(#mh2)"/><path d="M5.500 6V9.200Q5.800 11.600 8.400 11.600Q11 11.600 11.400 9.500" stroke="#2a2a60" stroke-width="0.800" fill="none" stroke-dasharray="1 1"/><rect x="7.400" y="11.500" width="2.200" height="3" fill="#50507c"/><rect x="6" y="14.200" width="4.800" height="1.700" fill="#6a6a94"/></svg><span style="left:118.5px">SEGUE</span><span style="left:168px;width:80px;text-align:center">TRACK</span><span style="left:378px;letter-spacing:0.1px">Voice Track</span></div>
</div>
<div class="a hd" style="left:15px;width:33px"></div>
<div class="a hd" style="left:48px;width:79px">TIME</div>
<div class="a hd" style="left:127px;width:57px">TRANS</div>
<div class="a hd" style="left:184px;width:78px">CART</div>
<div class="a hd" style="left:262px;width:61px">GROUP</div>
<div class="a hd" style="left:323px;width:64px">LENGTH</div>
<div class="a hd" style="left:387px;width:288px;border-right:none">TITLE</div>
<!-- v scrollbar -->
<div class="a chk" style="left:675px;top:366px;width:16px;height:275px"></div>
<div class="a sb" style="left:675px;top:366px;width:16px;height:16px"></div>
<div class="a sb" style="left:675px;top:528px;width:16px;height:21px"></div>
<div class="a sb" style="left:675px;top:609px;width:16px;height:16px"></div>
<div class="a sb" style="left:675px;top:625px;width:16px;height:16px"></div>
<!-- h scrollbar -->
<div class="a chk" style="left:15px;top:641px;width:660px;height:16px"></div>
<div class="a" style="left:675px;top:641px;width:16px;height:16px;background:#c0c0c0"></div>
<div class="a sb" style="left:15px;top:641px;width:16px;height:16px"></div>
<div class="a sb" style="left:31px;top:641px;width:305px;height:16px"></div>
<div class="a sb" style="left:643px;top:641px;width:16px;height:16px"></div>
<div class="a sb" style="left:659px;top:641px;width:16px;height:16px"></div>
<svg class="a" style="left:0;top:360px" width="806" height="300" viewBox="0 360 806 300">
<g fill="#808080">
<path d="M679 376L683.500 371.500L688 376Z"/>
<path d="M679 619L683.500 614.500L688 619Z"/>
<path d="M679 631L683.500 635.500L688 631Z"/>
<path d="M25 644.500L20.500 649L25 653.500Z"/>
<path d="M653 644.500L648.500 649L653 653.500Z"/>
<path d="M665 644.500L669.500 649L665 653.500Z"/>
</g>
<rect x="678" y="533" width="1" height="1" fill="#9c9c9c"/><rect x="679" y="534" width="1" height="1" fill="#f6f6f6"/><rect x="678" y="537" width="1" height="1" fill="#9c9c9c"/><rect x="679" y="538" width="1" height="1" fill="#f6f6f6"/><rect x="678" y="541" width="1" height="1" fill="#9c9c9c"/><rect x="679" y="542" width="1" height="1" fill="#f6f6f6"/><rect x="682" y="533" width="1" height="1" fill="#9c9c9c"/><rect x="683" y="534" width="1" height="1" fill="#f6f6f6"/><rect x="682" y="537" width="1" height="1" fill="#9c9c9c"/><rect x="683" y="538" width="1" height="1" fill="#f6f6f6"/><rect x="682" y="541" width="1" height="1" fill="#9c9c9c"/><rect x="683" y="542" width="1" height="1" fill="#f6f6f6"/><rect x="686" y="533" width="1" height="1" fill="#9c9c9c"/><rect x="687" y="534" width="1" height="1" fill="#f6f6f6"/><rect x="686" y="537" width="1" height="1" fill="#9c9c9c"/><rect x="687" y="538" width="1" height="1" fill="#f6f6f6"/><rect x="686" y="541" width="1" height="1" fill="#9c9c9c"/><rect x="687" y="542" width="1" height="1" fill="#f6f6f6"/><rect x="174" y="644" width="1" height="1" fill="#9c9c9c"/><rect x="175" y="645" width="1" height="1" fill="#f6f6f6"/><rect x="174" y="648" width="1" height="1" fill="#9c9c9c"/><rect x="175" y="649" width="1" height="1" fill="#f6f6f6"/><rect x="174" y="652" width="1" height="1" fill="#9c9c9c"/><rect x="175" y="653" width="1" height="1" fill="#f6f6f6"/><rect x="178" y="644" width="1" height="1" fill="#9c9c9c"/><rect x="179" y="645" width="1" height="1" fill="#f6f6f6"/><rect x="178" y="648" width="1" height="1" fill="#9c9c9c"/><rect x="179" y="649" width="1" height="1" fill="#f6f6f6"/><rect x="178" y="652" width="1" height="1" fill="#9c9c9c"/><rect x="179" y="653" width="1" height="1" fill="#f6f6f6"/><rect x="182" y="644" width="1" height="1" fill="#9c9c9c"/><rect x="183" y="645" width="1" height="1" fill="#f6f6f6"/><rect x="182" y="648" width="1" height="1" fill="#9c9c9c"/><rect x="183" y="649" width="1" height="1" fill="#f6f6f6"/><rect x="182" y="652" width="1" height="1" fill="#9c9c9c"/><rect x="183" y="653" width="1" height="1" fill="#f6f6f6"/><rect x="186" y="644" width="1" height="1" fill="#9c9c9c"/><rect x="187" y="645" width="1" height="1" fill="#f6f6f6"/><rect x="186" y="648" width="1" height="1" fill="#9c9c9c"/><rect x="187" y="649" width="1" height="1" fill="#f6f6f6"/><rect x="186" y="652" width="1" height="1" fill="#9c9c9c"/><rect x="187" y="653" width="1" height="1" fill="#f6f6f6"/><rect x="190" y="644" width="1" height="1" fill="#9c9c9c"/><rect x="191" y="645" width="1" height="1" fill="#f6f6f6"/><rect x="190" y="648" width="1" height="1" fill="#9c9c9c"/><rect x="191" y="649" width="1" height="1" fill="#f6f6f6"/><rect x="190" y="652" width="1" height="1" fill="#9c9c9c"/><rect x="191" y="653" width="1" height="1" fill="#f6f6f6"/>
</svg>
</div>
</body></html>
